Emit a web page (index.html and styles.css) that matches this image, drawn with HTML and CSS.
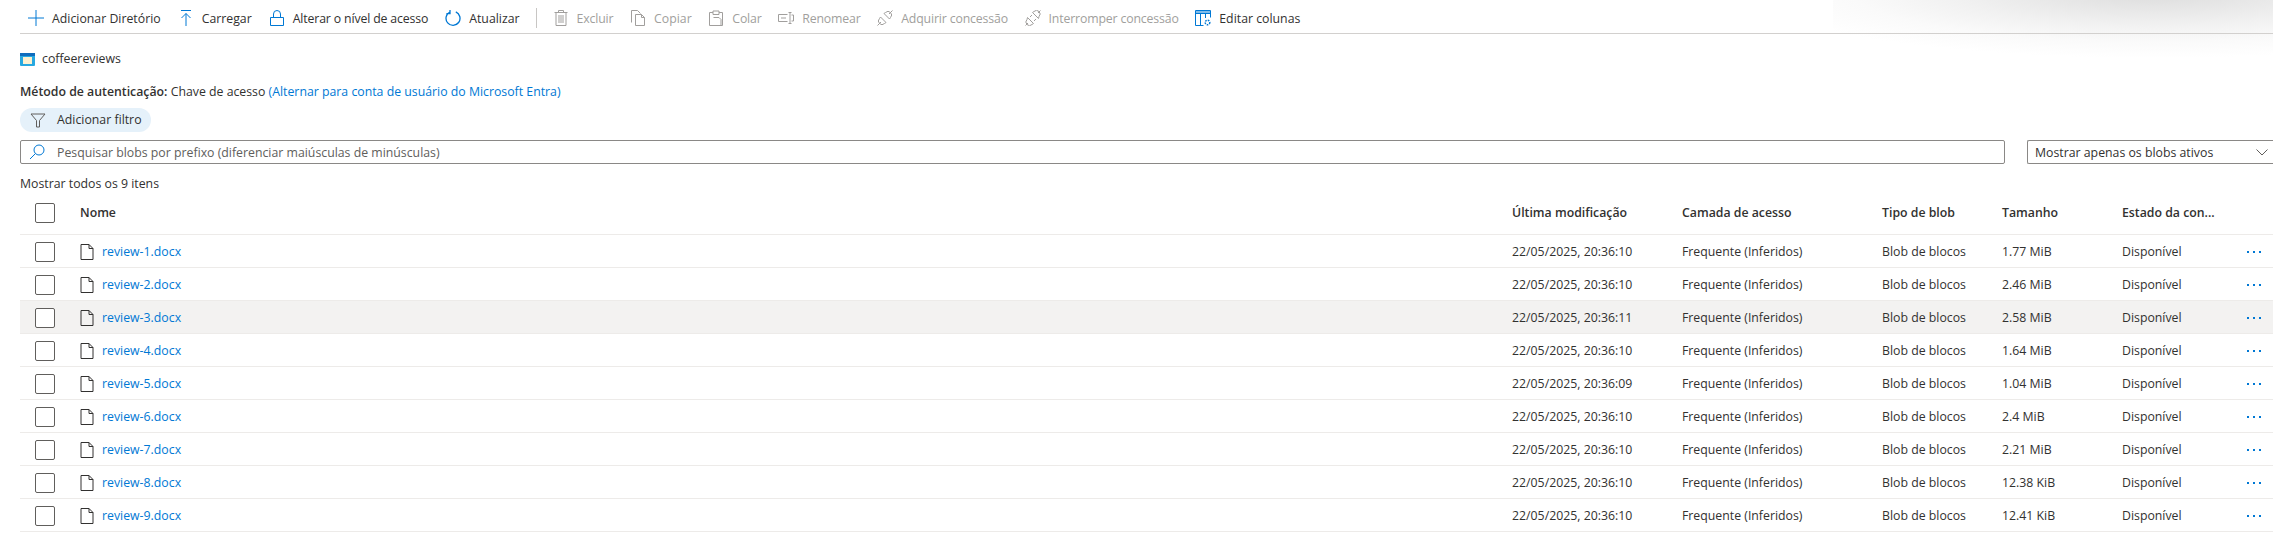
FILE: index.html
```html
<!DOCTYPE html>
<html lang="pt">
<head>
<meta charset="utf-8">
<title>coffeereviews</title>
<link rel="stylesheet" href="styles.css">
</head>
<body>
<div class="glow"></div>
<main class="page">
  <nav class="toolbar">
    <button class="tool"><svg class="ico blue" viewBox="0 0 16 16"><path d="M8 0v16M0 8h16"/></svg><span>Adicionar Diretório</span></button>
    <button class="tool"><svg class="ico blue" viewBox="0 0 16 16"><path d="M3 .5h10M8 16V3.500M3.500 8L8 3.500 12.500 8"/></svg><span>Carregar</span></button>
    <button class="tool tight"><svg class="ico blue" viewBox="0 0 16 16"><path d="M1.500 7.500h13v8h-13zM4.500 7.500V4a3.500 3.500 0 0 1 7 0v3.500"/></svg><span>Alterar o nível de acesso</span></button>
    <button class="tool"><svg class="ico blue sw" viewBox="0 0 16 16"><path d="M10.800 1.900a7 7 0 1 1-6 .2M5 0v3.600H1.400"/></svg><span>Atualizar</span></button>
    <i class="sep"></i>
    <button class="tool off tight"><svg class="ico gray" viewBox="0 0 16 16"><path d="M1.500 2.500h13M5.500 2.500V.5h5v2M3 2.500v13h10v-13M6 5v8M8 5v8M10 5v8"/></svg><span>Excluir</span></button>
    <button class="tool off"><svg class="ico gray" viewBox="0 0 16 16"><path d="M1.500 12.500V.5h6l3 3M5.500 4.500v11h9V7.500l-3-3zM11.500 4.500v3h3"/></svg><span>Copiar</span></button>
    <button class="tool off tight"><svg class="ico gray" viewBox="0 0 16 16"><path d="M5 2.500H1.500v13h13v-13H11M5 1h6v3.500H5zM5.500 7.500h5.500l2 2v6"/></svg><span>Colar</span></button>
    <button class="tool off tight"><svg class="ico gray" viewBox="0 0 16 16"><path d="M9.500 4.500H.5v7h9M3 8h5M10.500 2.500h1.500v11h-1.500M13.500 2.500H12M13.500 13.500H12M13.500 5h2v6h-2"/></svg><span>Renomear</span></button>
    <button class="tool off tight"><svg class="ico gray" viewBox="0 0 16 16"><path d="M.5 15.500l3.500-3.500M15.500.5L12 4M3.500 7L9 12.500l-1.500 1A3.500 3.500 0 0 1 2.500 8.500zM12.500 9L7 3.500l1.500-1a3.500 3.500 0 0 1 5 5z"/></svg><span>Adquirir concessão</span></button>
    <button class="tool off tight"><svg class="ico gray" viewBox="0 0 16 16"><path d="M.5 15.500L3 13M15.500.5L13 3M2.500 7.500l6 6-1.500 1a3.300 3.300 0 0 1-5-5zM13.500 8.500l-6-6 1.500-1a3.300 3.300 0 0 1 5 5zM5 7l2-2M9 11l2-2"/></svg><span>Interromper concessão</span></button>
    <button class="tool"><svg class="ico blue" viewBox="0 0 16 16"><path d="M.5.5h15v7M.5.5v15h8M.5 3.500h15M.5 2h15M5.500 3.500v12M10.500 3.500v4.500"/><circle class="gear" cx="12.500" cy="12.500" r="2.300"/></svg><span>Editar colunas</span></button>
  </nav>

  <div class="crumb">
    <svg class="box-ico" viewBox="0 0 15 13"><rect width="15" height="13" rx="1" fill="#28a8e0"/><rect width="15" height="3" fill="#0f6cbd"/><rect x="3" y="4" width="9" height="7" fill="#fdf0cf"/></svg>
    <span>coffeereviews</span>
  </div>

  <p class="auth"><b>Método de autenticação:</b> <span>Chave de acesso</span> <a href="#">(Alternar para conta de usuário do Microsoft Entra)</a></p>

  <button class="pill"><svg class="ico dark" viewBox="0 0 16 16"><path d="M1 2h14L9.500 8.500V15h-3V8.500z"/></svg><span>Adicionar filtro</span></button>

  <div class="filters">
    <div class="search"><svg class="ico blue" viewBox="0 0 16 16"><circle cx="10" cy="6" r="5"/><path d="M6.500 9.500L1 15"/></svg><span>Pesquisar blobs por prefixo (diferenciar maiúsculas de minúsculas)</span></div>
    <div class="select"><span>Mostrar apenas os blobs ativos</span><svg class="chev" viewBox="0 0 12 7"><path d="M.5.500L6 6l5.500-5.500"/></svg></div>
  </div>

  <p class="count">Mostrar todos os 9 itens</p>

  <section class="grid">
    <div class="row head">
      <i class="check"></i><div>Nome</div><div>Última modificação</div><div>Camada de acesso</div><div>Tipo de blob</div><div>Tamanho</div><div>Estado da con...</div><div></div>
    </div>
    <div class="row"><i class="check"></i><div class="name"><svg class="file" viewBox="0 0 14 16"><path d="M1 .5h8l4 4v11H1zM9 .5v4h4"/></svg><a href="#">review-1.docx</a></div><div>22/05/2025, 20:36:10</div><div>Frequente (Inferidos)</div><div>Blob de blocos</div><div>1.77 MiB</div><div>Disponível</div><div class="more"><i></i><i></i><i></i></div></div>
    <div class="row"><i class="check"></i><div class="name"><svg class="file" viewBox="0 0 14 16"><path d="M1 .5h8l4 4v11H1zM9 .5v4h4"/></svg><a href="#">review-2.docx</a></div><div>22/05/2025, 20:36:10</div><div>Frequente (Inferidos)</div><div>Blob de blocos</div><div>2.46 MiB</div><div>Disponível</div><div class="more"><i></i><i></i><i></i></div></div>
    <div class="row hover"><i class="check"></i><div class="name"><svg class="file" viewBox="0 0 14 16"><path d="M1 .5h8l4 4v11H1zM9 .5v4h4"/></svg><a href="#">review-3.docx</a></div><div>22/05/2025, 20:36:11</div><div>Frequente (Inferidos)</div><div>Blob de blocos</div><div>2.58 MiB</div><div>Disponível</div><div class="more"><i></i><i></i><i></i></div></div>
    <div class="row"><i class="check"></i><div class="name"><svg class="file" viewBox="0 0 14 16"><path d="M1 .5h8l4 4v11H1zM9 .5v4h4"/></svg><a href="#">review-4.docx</a></div><div>22/05/2025, 20:36:10</div><div>Frequente (Inferidos)</div><div>Blob de blocos</div><div>1.64 MiB</div><div>Disponível</div><div class="more"><i></i><i></i><i></i></div></div>
    <div class="row"><i class="check"></i><div class="name"><svg class="file" viewBox="0 0 14 16"><path d="M1 .5h8l4 4v11H1zM9 .5v4h4"/></svg><a href="#">review-5.docx</a></div><div>22/05/2025, 20:36:09</div><div>Frequente (Inferidos)</div><div>Blob de blocos</div><div>1.04 MiB</div><div>Disponível</div><div class="more"><i></i><i></i><i></i></div></div>
    <div class="row"><i class="check"></i><div class="name"><svg class="file" viewBox="0 0 14 16"><path d="M1 .5h8l4 4v11H1zM9 .5v4h4"/></svg><a href="#">review-6.docx</a></div><div>22/05/2025, 20:36:10</div><div>Frequente (Inferidos)</div><div>Blob de blocos</div><div>2.4 MiB</div><div>Disponível</div><div class="more"><i></i><i></i><i></i></div></div>
    <div class="row"><i class="check"></i><div class="name"><svg class="file" viewBox="0 0 14 16"><path d="M1 .5h8l4 4v11H1zM9 .5v4h4"/></svg><a href="#">review-7.docx</a></div><div>22/05/2025, 20:36:10</div><div>Frequente (Inferidos)</div><div>Blob de blocos</div><div>2.21 MiB</div><div>Disponível</div><div class="more"><i></i><i></i><i></i></div></div>
    <div class="row"><i class="check"></i><div class="name"><svg class="file" viewBox="0 0 14 16"><path d="M1 .5h8l4 4v11H1zM9 .5v4h4"/></svg><a href="#">review-8.docx</a></div><div>22/05/2025, 20:36:10</div><div>Frequente (Inferidos)</div><div>Blob de blocos</div><div>12.38 KiB</div><div>Disponível</div><div class="more"><i></i><i></i><i></i></div></div>
    <div class="row"><i class="check"></i><div class="name"><svg class="file" viewBox="0 0 14 16"><path d="M1 .5h8l4 4v11H1zM9 .5v4h4"/></svg><a href="#">review-9.docx</a></div><div>22/05/2025, 20:36:10</div><div>Frequente (Inferidos)</div><div>Blob de blocos</div><div>12.41 KiB</div><div>Disponível</div><div class="more"><i></i><i></i><i></i></div></div>
  </section>
</main>
</body>
</html>
```
FILE: styles.css
```css
* { box-sizing: border-box; }
html, body { margin: 0; height: 100%; background: #fff; overflow: hidden; }
body { font: 12.3px/18px "Open Sans", "Noto Sans", sans-serif; color: #323130; position: relative; }
a { color: #0078d4; text-decoration: none; }
p { margin: 0; }

.glow {
  position: absolute; top: 0; right: 0; width: 440px; height: 70px; pointer-events: none;
  background: radial-gradient(ellipse 400px 66px at 320px -8px, #dcdcdc 0%, #f1f1f1 50%, #fafafa 75%, rgba(255,255,255,0) 100%);
}
.page { position: relative; padding-left: 20px; }

.toolbar { display: flex; align-items: center; height: 34px; padding: 3px 0 0 8px; border-bottom: 1px solid #d2d0ce; }
.tool { display: flex; align-items: center; gap: 8px; padding: 0; border: 0; background: none; font: inherit; color: inherit; margin-right: 17px; white-space: nowrap; }
.tool span { padding-top: 1px; }
.tool.tight { letter-spacing: -.15px; }
.tool.off { color: #a19f9d; margin-right: 16.6px; }
.ico { width: 16px; height: 16px; fill: none; stroke-width: 1; flex: none; }
.blue { stroke: #0078d4; }
.gray { stroke: #a19f9d; }
.dark { stroke: #605e5c; }
.sw { stroke-width: 1.300; }
.gear { fill: #fff; stroke-width: 1.500; stroke-dasharray: 1.500 1; }
.sep { width: 1px; height: 20px; background: #c8c6c4; margin: 0 16px 0 -1px; }

.crumb { display: flex; align-items: center; gap: 7px; height: 18px; margin-top: 16px; }
.box-ico { width: 15px; height: 13px; }

.auth { margin-top: 15px; height: 18px; }
.auth b { font-weight: 600; }

.pill { display: flex; align-items: center; gap: 11px; width: 131px; height: 24px; margin-top: 7px; padding: 0 0 0 10px; border: 0; border-radius: 12px; background: #e5f1fa; font: inherit; color: #323130; }

.filters { display: flex; gap: 22px; margin-top: 8px; }
.search, .select { display: flex; align-items: center; height: 24px; background: #fff; border: 1px solid #8a8886; border-radius: 2px; color: #605e5c; }
.search span, .select span { padding-top: 1px; }
.search { width: 1985px; padding-left: 8px; gap: 12px; }
.select { flex: 1; padding: 0 5px 0 7px; justify-content: space-between; color: #323130; border-right: 0; border-radius: 2px 0 0 2px; }
.chev { width: 12px; height: 7px; fill: none; stroke: #605e5c; }

.count { margin-top: 11px; height: 18px; }

.row { display: grid; grid-template-columns: 45px 1432px 170px 200px 120px 120px 125px 1fr; align-items: center; height: 33px; padding: 1px 0 0 15px; border-bottom: 1px solid #edebe9; }
.row.head { height: 42px; padding-top: 0; padding-bottom: 1px; font-weight: 600; }
.row.hover { background: #f3f2f1; }
.check { width: 20px; height: 20px; border: 1px solid #605e5c; border-radius: 2px; background: #fff; }
.name { display: flex; align-items: center; gap: 8px; }
.file { width: 14px; height: 16px; fill: none; stroke: #323130; stroke-width: 1; }
.more { display: flex; gap: 4px; }
.more i { width: 2px; height: 2px; background: #0078d4; }
```
